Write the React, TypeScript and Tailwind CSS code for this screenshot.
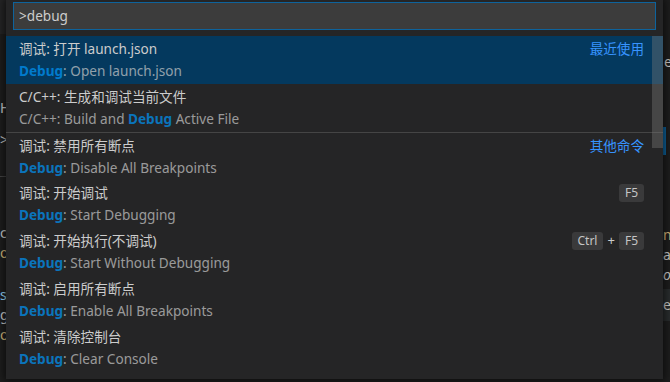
import React from 'react';

type Item = {
    label: string;
    pre?: string;
    post: string;
    tag?: string;
    keys?: string[];
    sep?: boolean;
};

const items: Item[] = [
    { label: '调试: 打开 launch.json', post: ': Open launch.json', tag: '最近使用' },
    { label: 'C/C++: 生成和调试当前文件', pre: 'C/C++: Build and ', post: ' Active File' },
    { label: '调试: 禁用所有断点', post: ': Disable All Breakpoints', tag: '其他命令', sep: true },
    { label: '调试: 开始调试', post: ': Start Debugging', keys: ['F5'] },
    { label: '调试: 开始执行(不调试)', post: ': Start Without Debugging', keys: ['Ctrl', 'F5'] },
    { label: '调试: 启用所有断点', post: ': Enable All Breakpoints' },
    { label: '调试: 清除控制台', post: ': Clear Console' },
];

const Key: React.FC<{ k: string }> = ({ k }) => (
    <span className="inline-flex h-[18px] items-center rounded-[3px] bg-[#3a3a3b] px-[6px] text-[12px] leading-none text-[#c5c5c5]">
        {k}
    </span>
);

const Row: React.FC<{ item: Item; active: boolean }> = ({ item, active }) => (
    <div
        className={`flex h-[48px] items-start justify-between pl-[13px] pr-[19px] ${
            active ? 'bg-[#04395e]' : ''
        } ${item.sep ? 'border-t border-[#454545]' : ''}`}
    >
        <div className="flex flex-col pt-[2px]">
            <div className="h-[22px] leading-[22px] text-[#cccccc]">{item.label}</div>
            <div className="h-[22px] leading-[22px] text-[#cccccc] opacity-70">
                {item.pre}
                <span className="font-bold text-[#0097fb]">Debug</span>
                {item.post}
            </div>
        </div>
        {item.tag && <div className="pt-[2px] leading-[22px] text-[#3794ff]">{item.tag}</div>}
        {item.keys && (
            <div className="flex h-[22px] items-center gap-[4px] pt-[3px] text-[#cccccc]">
                {item.keys.map((k, i) => (
                    <React.Fragment key={k}>
                        {i > 0 && <span className="text-[13px]">+</span>}
                        <Key k={k} />
                    </React.Fragment>
                ))}
            </div>
        )}
    </div>
);

export default function App() {
    return (
        <div
            className="relative h-[382px] w-[670px] overflow-hidden bg-[#1e1e1e] text-[13.6px]"
            style={{ fontFamily: '"Noto Sans", "Noto Sans CJK SC", sans-serif' }}
        >
            {/* editor peeking out behind the palette */}
            <div className="flex h-full justify-between">
                <div className="flex w-[6px] flex-col overflow-hidden text-[14px] leading-[20px] text-[#cccccc]">
                    <div className="h-[34px] bg-[#252526]" />
                    <div className="h-[64px]" />
                    <div>H</div>
                    <div className="mt-[12px]">&gt;</div>
                    <div className="mt-[26px] h-[1px] bg-[#454545]" />
                    <div className="mt-[46px]">c</div>
                    <div className="text-[#d7ba7d]">o</div>
                    <div className="mt-[22px] text-[#9cdcfe]">s</div>
                    <div>g</div>
                    <div className="text-[#d7ba7d]">o</div>
                </div>
                <div className="flex w-[7px] flex-col overflow-hidden text-[14px] leading-[20px] text-[#cccccc]">
                    <div className="h-[52px]" />
                    <div className="pl-[1px]">e</div>
                    <div className="mt-[55px] ml-0 h-[28px] w-[3px] bg-[#0e639c]" />
                    <div className="h-[70px]" />
                    <div className="text-[#d7ba7d]">n/</div>
                    <div>a</div>
                    <div className="italic">o</div>
                    <div className="mt-[4px] bg-[#2a2d2e] py-[6px]">e</div>
                </div>
            </div>

            {/* command palette */}
            <div className="absolute left-[6px] top-0 h-[379px] w-[657px] bg-[#252526] shadow-[0_0_8px_2px_rgba(0,0,0,0.6)]">
                <div className="px-[7px] pt-[2px]">
                    <div className="flex h-[28px] items-center border border-[#0e639c] bg-[#3c3c3c] pl-[5px] text-[#cccccc]">
                        &gt;debug
                    </div>
                </div>
                <div className="relative mt-[6px]">
                    {items.map((item, i) => (
                        <Row key={item.label} item={item} active={i === 0} />
                    ))}
                    <div className="absolute right-0 top-0 h-[112px] w-[11px] bg-[rgba(121,121,121,0.4)]" />
                </div>
            </div>
        </div>
    );
}
